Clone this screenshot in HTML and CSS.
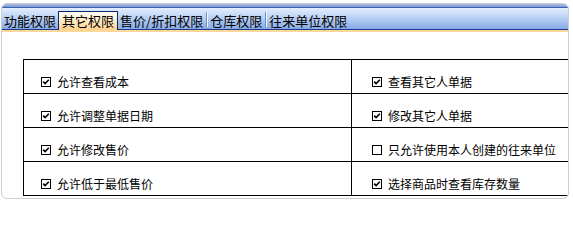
FILE: index.html
```html
<!DOCTYPE html>
<html>
<head>
<meta charset="utf-8">
<link rel="stylesheet" href="styles.css">
</head>
<body>
<div class="panel">
  <div class="tabbar">
    <span class="tab">功能权限</span>
    <span class="tab tab-active">其它权限</span>
    <span class="tab">售价/折扣权限</span>
    <span class="sep"></span>
    <span class="tab">仓库权限</span>
    <span class="sep"></span>
    <span class="tab">往来单位权限</span>
  </div>
  <div class="tabline"></div>
  <div class="content">
    <div class="grid">
      <div class="cell cell-left"><svg class="cb" width="10" height="10" viewBox="0 0 10 10"><rect x="0.5" y="0.5" width="9" height="9" fill="#fff" stroke="#000"/><path d="M2.2 4.6 L4.1 6.6 L7.8 2.8" fill="none" stroke="#000" stroke-width="1.6"/></svg><span>允许查看成本</span></div>
      <div class="cell cell-right"><svg class="cb" width="10" height="10" viewBox="0 0 10 10"><rect x="0.5" y="0.5" width="9" height="9" fill="#fff" stroke="#000"/><path d="M2.2 4.6 L4.1 6.6 L7.8 2.8" fill="none" stroke="#000" stroke-width="1.6"/></svg><span>查看其它人单据</span></div>
      <div class="cell cell-left"><svg class="cb" width="10" height="10" viewBox="0 0 10 10"><rect x="0.5" y="0.5" width="9" height="9" fill="#fff" stroke="#000"/><path d="M2.2 4.6 L4.1 6.6 L7.8 2.8" fill="none" stroke="#000" stroke-width="1.6"/></svg><span>允许调整单据日期</span></div>
      <div class="cell cell-right"><svg class="cb" width="10" height="10" viewBox="0 0 10 10"><rect x="0.5" y="0.5" width="9" height="9" fill="#fff" stroke="#000"/><path d="M2.2 4.6 L4.1 6.6 L7.8 2.8" fill="none" stroke="#000" stroke-width="1.6"/></svg><span>修改其它人单据</span></div>
      <div class="cell cell-left"><svg class="cb" width="10" height="10" viewBox="0 0 10 10"><rect x="0.5" y="0.5" width="9" height="9" fill="#fff" stroke="#000"/><path d="M2.2 4.6 L4.1 6.6 L7.8 2.8" fill="none" stroke="#000" stroke-width="1.6"/></svg><span>允许修改售价</span></div>
      <div class="cell cell-right"><svg class="cb" width="10" height="10" viewBox="0 0 10 10"><rect x="0.5" y="0.5" width="9" height="9" fill="#fff" stroke="#000"/></svg><span>只允许使用本人创建的往来单位</span></div>
      <div class="cell cell-left"><svg class="cb" width="10" height="10" viewBox="0 0 10 10"><rect x="0.5" y="0.5" width="9" height="9" fill="#fff" stroke="#000"/><path d="M2.2 4.6 L4.1 6.6 L7.8 2.8" fill="none" stroke="#000" stroke-width="1.6"/></svg><span>允许低于最低售价</span></div>
      <div class="cell cell-right"><svg class="cb" width="10" height="10" viewBox="0 0 10 10"><rect x="0.5" y="0.5" width="9" height="9" fill="#fff" stroke="#000"/><path d="M2.2 4.6 L4.1 6.6 L7.8 2.8" fill="none" stroke="#000" stroke-width="1.6"/></svg><span>选择商品时查看库存数量</span></div>
    </div>
  </div>
</div>
</body>
</html>
```
FILE: styles.css
```css
html, body {
  margin: 0;
  padding: 0;
  background: #fff;
}
body {
  font-family: "Noto Sans CJK SC", "Liberation Sans", sans-serif;
  color: #000;
}
.panel {
  margin: 3px 0 0 1px;
  width: 566px;
  height: 194px;
  border: 1px solid #c9cdd4;
  border-radius: 6px;
  overflow: hidden;
  background: #fff;
}
.tabbar {
  height: 25px;
  display: flex;
  align-items: flex-end;
  padding-left: 0;
  border-bottom: 1px solid #1c3a8c;
  background: linear-gradient(to bottom,
    #a9bde0 0, #7e9ad0 3px, #3b5fb2 3px, #3b5fb2 4px,
    #e2edfd 4px, #cfe0f8 35%, #a8c4ef 70%, #86a9e4 100%);
}
.tab {
  height: 17px;
  line-height: 17px;
  padding: 0 2px;
  font-size: 13px;
  white-space: nowrap;
}
.tab-active {
  height: 18px;
  line-height: 18px;
  padding: 0 3px;
  margin-bottom: -1px;
  border: 1px solid #0a246a;
  border-bottom: none;
  background: linear-gradient(to bottom, #fffcf4 0, #ffedc9 45%, #ffd08a 100%);
}
.sep {
  width: 0;
  height: 15px;
  margin: 0 0 2px 1px;
  align-self: flex-end;
  border-left: 1px solid #6c8cc8;
  border-right: 1px solid #f2f7ff;
}
.tabline {
  height: 2px;
  background: #fcd79a;
}
.content {
  padding: 27px 0 0 21px;
}
.grid {
  display: grid;
  grid-template-columns: 328px 328px;
  width: 657px;
  border-top: 1px solid #000;
  border-left: 1px solid #000;
}
.cell {
  box-sizing: border-box;
  height: 34px;
  border-right: 1px solid #000;
  border-bottom: 1px solid #000;
  padding-top: 10px;
  display: flex;
  align-items: center;
  align-self: start;
  font-size: 12px;
  line-height: 14px;
  white-space: nowrap;
}
.cell-left {
  padding-left: 17px;
}
.cell-right {
  padding-left: 20px;
}
.cell .cb {
  display: block;
  flex: none;
  margin-right: 6px;
}
```
